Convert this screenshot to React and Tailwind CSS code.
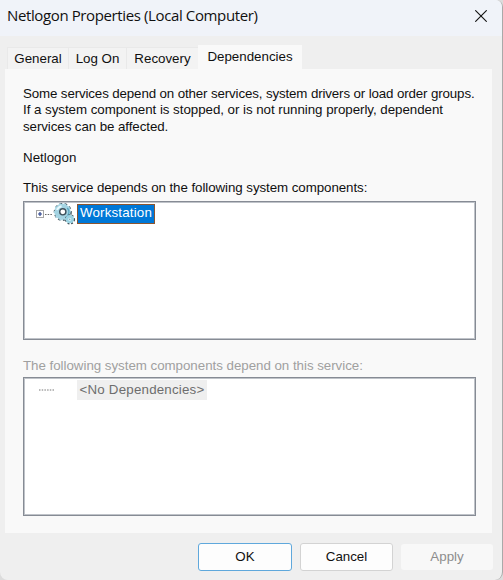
import React from "react";

function Gear() {
  return (
    <svg width="23" height="23" viewBox="0 0 23 23" className="-mt-px block shrink-0">
      <circle cx="9.8" cy="9" r="8" fill="none" stroke="#53666f" strokeWidth="2.2" strokeDasharray="2.6 2.3" />
      <circle cx="9.6" cy="8.8" r="5.6" fill="none" stroke="#a3d3e2" strokeWidth="4.8" />
      <circle cx="9.4" cy="8.8" r="7.6" fill="none" stroke="#a9d8e6" strokeWidth="1.8" strokeDasharray="2.4 2.5" strokeDashoffset="2.4" />
      <path d="M4 7 A6 6 0 0 1 8.6 3.2" stroke="#e6f8fc" strokeWidth="2" fill="none" />
      <path d="M14.3 5 A6 6 0 0 1 14.3 13" stroke="#5aa7c2" strokeWidth="1.5" fill="none" />
      <circle cx="9.8" cy="8.8" r="3.1" fill="#fff" stroke="#3c505b" strokeWidth="1.4" />
      <circle cx="17" cy="16.4" r="4.2" fill="none" stroke="#3d5059" strokeWidth="1.7" strokeDasharray="1.8 1.7" />
      <circle cx="16.8" cy="16.2" r="2.8" fill="#e4f6fa" stroke="#9ad2e2" strokeWidth="2.6" />
      <circle cx="16.8" cy="16.2" r="0.7" fill="#6c96a4" />
    </svg>
  );
}

function Tab({ children, className }) {
  return (
    <div className={"flex h-[22px] items-center justify-center border-l border-t border-[#e9e9e9] bg-[#f3f3f3] pt-[2px] " + className}>
      {children}
    </div>
  );
}

export default function App() {
  return (
    <div className="h-[580px] w-[503px] overflow-hidden bg-[#dcdcdc] font-['Liberation_Sans',Arial,sans-serif] text-[13.33px] leading-[16.33px] whitespace-nowrap text-[#101010]">
      <div className="flex h-[580px] w-[503px] flex-col overflow-hidden rounded-tr-[7px] rounded-b-[8px] border-r border-[#a9a9a9] bg-[#efefef]">
        <div className="flex h-[36px] shrink-0 items-start justify-between bg-[#f0f3f9] pl-[7px] pr-[15px]">
          <h1 className="pt-[3px] font-['Open_Sans','Segoe_UI',sans-serif] text-[15px] leading-[24px] tracking-[-0.38px]">
            Netlogon Properties (Local Computer)
          </h1>
          <svg width="12" height="12" viewBox="0 0 12 12" className="mt-[10px]">
            <path d="M0.3 0.3 L11.7 11.7 M11.7 0.3 L0.3 11.7" stroke="#111" strokeWidth="1.1" />
          </svg>
        </div>

        <div className="flex h-[33px] shrink-0 items-end pl-[7px]">
          <Tab className="w-[61px]">General</Tab>
          <Tab className="w-[58px]">Log On</Tab>
          <Tab className="w-[72px]">Recovery</Tab>
          <div className="flex h-[24px] w-[104px] items-center justify-center bg-[#f9f9f9]">Dependencies</div>
        </div>

        <div className="ml-[5px] h-[464px] w-[487px] shrink-0 bg-[#f9f9f9] pl-[18px] pt-[17px]">
          <p>
            <span className="tracking-[-0.132px]">Some services depend on other services, system drivers or load order groups.</span>
            <br />
            <span className="tracking-[-0.04px]">If a system component is stopped, or is not running properly, dependent</span>
            <br />
            <span className="tracking-[-0.08px]">services can be affected.</span>
          </p>
          <p className="mt-[15px]">Netlogon</p>
          <p className="mt-[14px] tracking-[-0.07px]">This service depends on the following system components:</p>

          <div className="mt-[4px] flex h-[139px] w-[453px] items-start border border-[#868b94] bg-white pl-[12px] pt-[2px] shadow-[inset_0_0_0_1px_#bfc3c9]">
            <svg width="17" height="11" viewBox="0 0 17 11" className="mt-[5px] shrink-0">
              <rect x="0.5" y="1.5" width="7" height="7" fill="#fff" stroke="#a5a5a5" />
              <path d="M2 5H6 M4 3V7" stroke="#28408c" strokeWidth="1.2" />
              <path d="M9 5.5H17" stroke="#666" strokeDasharray="1.5 1.2" />
            </svg>
            <Gear />
            <div className="ml-[1px] flex h-[20px] w-[78px] items-center justify-center border border-[#8b5530] bg-[#0078d7] tracking-[0.18px] text-white">
              Workstation
            </div>
          </div>

          <p className="mt-[18px] tracking-[-0.03px] text-[#a0a0a0]">The following system components depend on this service:</p>
          <div className="mt-[3px] flex h-[139px] w-[453px] items-start border border-[#868b94] bg-white pl-[15px] pt-px shadow-[inset_0_0_0_1px_#bfc3c9]">
            <svg width="15" height="2" viewBox="0 0 15 2" className="mt-[10px] shrink-0">
              <path d="M0 1H15" stroke="#777" strokeWidth="1.2" strokeDasharray="1.5 1.2" />
            </svg>
            <div className="ml-[23px] mt-[1px] flex h-[20px] w-[130px] items-center justify-center bg-[#efefef] tracking-[0.2px] text-[#6d6d6d]">
              &lt;No Dependencies&gt;
            </div>
          </div>
        </div>

        <div className="flex items-center gap-[8px] pl-[198px] pt-[10px]">
          <button className="h-[28px] w-[94px] rounded-[3px] border border-[#5fa8dc] bg-[#fdfdfd]">OK</button>
          <button className="h-[28px] w-[93px] rounded-[3px] border border-[#d3d3d3] bg-[#fdfdfd]">Cancel</button>
          <button className="h-[26px] w-[92px] rounded-[3px] bg-[#f8f8f8] text-[#8d8d8d]">Apply</button>
        </div>
      </div>
    </div>
  );
}
